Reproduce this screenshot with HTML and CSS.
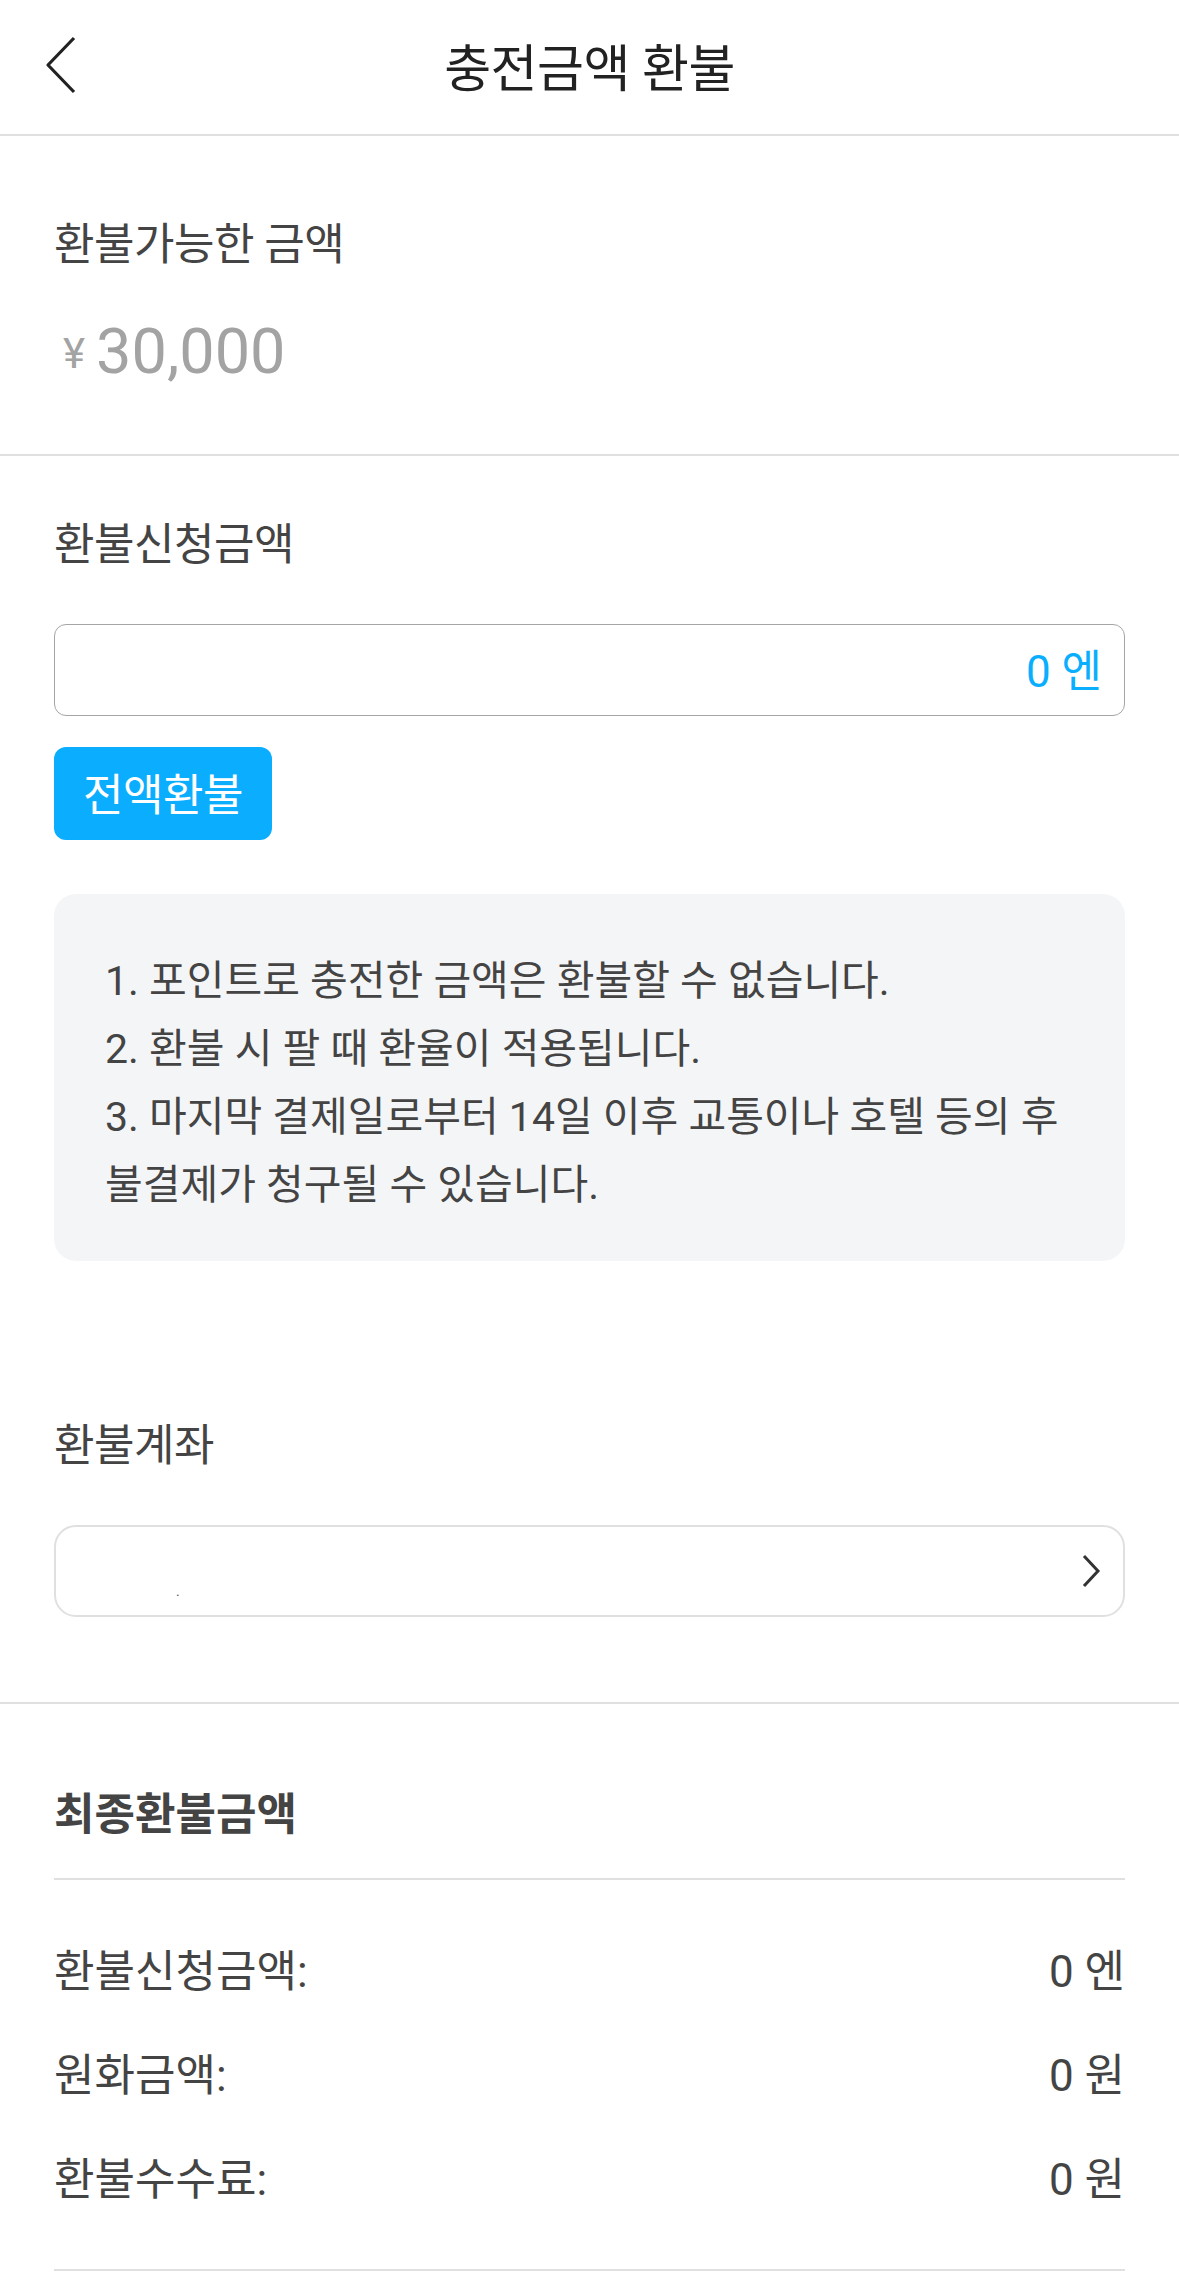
FILE: index.html
```html
<!DOCTYPE html>
<html lang="ko">
<head>
    <meta charset="UTF-8">
    <meta name="viewport" content="width=device-width, initial-scale=1.0">
    <title>충전금액 환불</title>
    <link rel="stylesheet" href="styles.css">
</head>
<body>
    <header class="topbar">
        <button class="back" aria-label="뒤로">
            <svg width="34" height="58" viewBox="0 0 34 58"><polyline points="30,2 4,29 30,56" fill="none" stroke="#222" stroke-width="3.2" stroke-linejoin="round"/></svg>
        </button>
        <h1 class="title">충전금액 환불</h1>
        <span></span>
    </header>

    <section class="available">
        <div class="label">환불가능한 금액</div>
        <div class="amount"><span class="yen">¥</span>30,000</div>
    </section>

    <section class="request">
        <div class="label">환불신청금액</div>
        <div class="input-box">0 엔</div>
        <button class="all-btn">전액환불</button>

        <div class="notice">
            <p>1. 포인트로 충전한 금액은 환불할 수 없습니다.</p>
            <p>2. 환불 시 팔 때 환율이 적용됩니다.</p>
            <p>3. 마지막 결제일로부터 14일 이후 교통이나 호텔 등의 후불결제가 청구될 수 있습니다.</p>
        </div>

        <div class="label account-label">환불계좌</div>
        <div class="account-box">
            <span class="dot">.</span>
            <svg width="20" height="34" viewBox="0 0 20 34"><polyline points="3,2 17,17 3,32" fill="none" stroke="#333" stroke-width="3"/></svg>
        </div>
    </section>

    <section class="summary">
        <div class="summary-title">최종환불금액</div>
        <div class="rows">
            <div class="row"><span>환불신청금액:</span><span>0 엔</span></div>
            <div class="row"><span>원화금액:</span><span>0 원</span></div>
            <div class="row"><span>환불수수료:</span><span>0 원</span></div>
        </div>
    </section>
</body>
</html>
```

FILE: styles.css
```css
* { box-sizing: border-box; }
body { margin: 0; font-family: Roboto, "Noto Sans CJK KR", sans-serif; color: #444; background: #fff; }

.topbar { height: 136px; display: grid; grid-template-columns: 130px 1fr 130px; align-items: center; border-bottom: 2px solid #e0e0e0; }
.back { border: 0; background: none; padding: 0 0 4px 44px; text-align: left; cursor: pointer; display: flex; }
.title { margin: 0; text-align: center; font-size: 51px; font-weight: 400; color: #222; letter-spacing: -0.5px; padding-bottom: 4px; }

.label { font-size: 44px; line-height: 60px; color: #444; letter-spacing: -0.5px; }

.available { padding: 79px 54px 62px; border-bottom: 2px solid #e0e0e0; }
.amount { margin-top: 37px; font-size: 63px; line-height: 76px; color: #a3a3a3; display: flex; align-items: center; }
.yen { font-size: 42px; margin: 4px 11px 0 9px; }

.request { padding: 59px 54px 85px; border-bottom: 2px solid #e0e0e0; }
.input-box { margin-top: 49px; height: 92px; border: 1.5px solid #a5a5a5; border-radius: 12px; display: flex; align-items: center; justify-content: flex-end; padding: 0 22px 4px; font-size: 44px; color: #0aaeff; }
.all-btn { display: block; margin-top: 31px; width: 218px; height: 93px; border: 0; border-radius: 12px; background: #0badff; color: #fff; font-family: inherit; font-size: 44px; padding: 0 0 4px; cursor: pointer; letter-spacing: -0.5px; }

.notice { margin-top: 54px; background: #f4f5f7; border-radius: 22px; padding: 53px 48px 42px 51px; font-size: 41px; line-height: 68px; color: #444; }
.notice p { margin: 0; }

.account-label { margin-top: 155px; }
.account-box { margin-top: 49px; height: 92px; border: 2.5px solid #e0e0e0; border-radius: 22px; display: flex; align-items: center; justify-content: space-between; padding: 0 22px 0 120px; }
.dot { font-size: 14px; color: #555; margin-top: 40px; }

.summary { padding: 81px 54px 0; }
.summary-title { font-size: 44px; line-height: 60px; font-weight: 700; color: #444; }
.rows { margin-top: 33px; border-top: 2.5px solid #e0e0e0; border-bottom: 2.5px solid #e0e0e0; padding: 40px 0 37px; }
.row { display: flex; justify-content: space-between; font-size: 44px; line-height: 60px; padding: 22px 0; color: #444; }
```
